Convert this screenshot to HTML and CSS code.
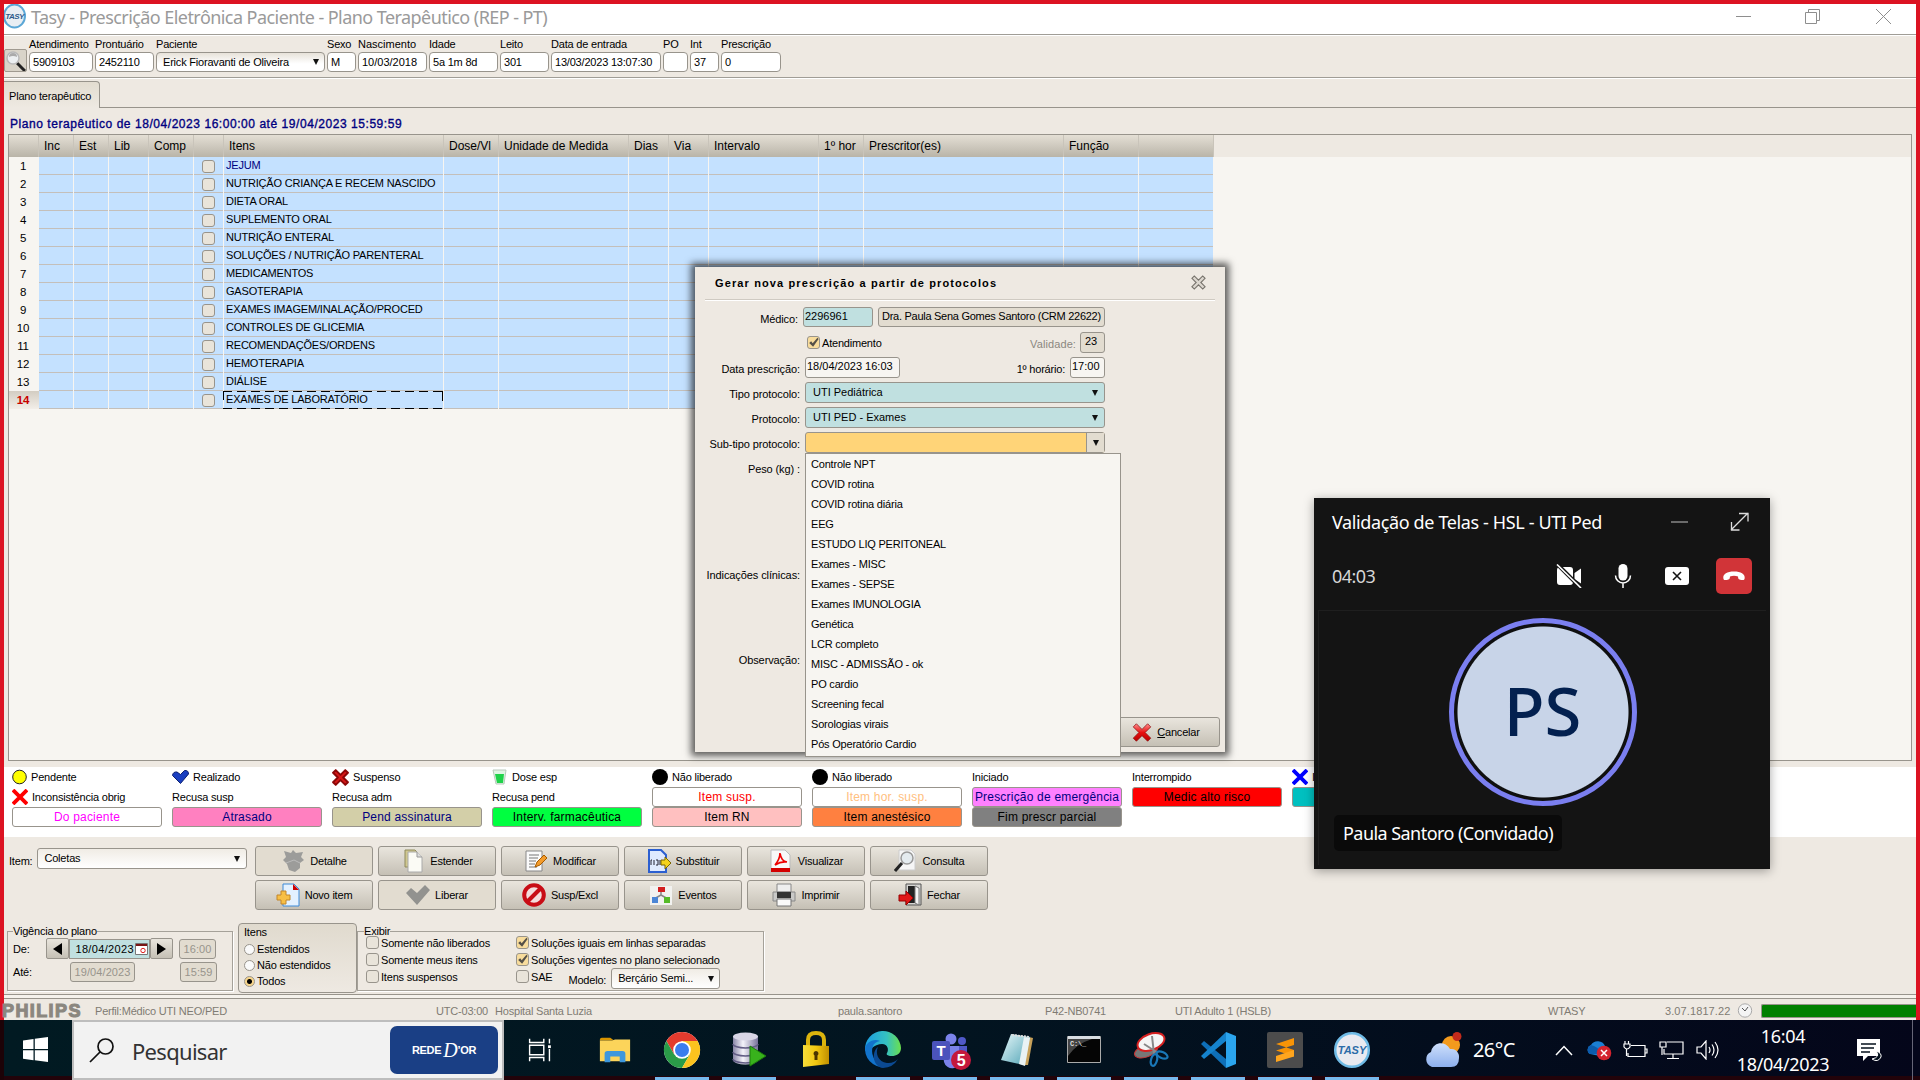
FILE: index.html
```html
<!DOCTYPE html>
<html lang="pt-BR">
<head>
<meta charset="utf-8">
<title>Tasy - Prescrição Eletrônica Paciente - Plano Terapêutico (REP - PT)</title>
<link rel="stylesheet" href="styles.css">
</head>
<body>
<svg class="defs" width="0" height="0" aria-hidden="true">
  <defs>
    <linearGradient id="redg" x1="0" y1="0" x2="0" y2="1"><stop offset="0" stop-color="#ff8f8f"/><stop offset=".5" stop-color="#e81010"/><stop offset="1" stop-color="#b80000"/></linearGradient>
    <linearGradient id="edgeg" x1="0" y1="0" x2="1" y2="0"><stop offset="0" stop-color="#1b9de2"/><stop offset=".6" stop-color="#35c1c1"/><stop offset="1" stop-color="#6be04e"/></linearGradient>
    <linearGradient id="cyl" x1="0" y1="0" x2="1" y2="0"><stop offset="0" stop-color="#8a86a8"/><stop offset=".4" stop-color="#f4f3fa"/><stop offset="1" stop-color="#77729a"/></linearGradient>
    <linearGradient id="gold" x1="0" y1="0" x2="1" y2="0"><stop offset="0" stop-color="#f7dd3a"/><stop offset=".5" stop-color="#f2c811"/><stop offset="1" stop-color="#c08f00"/></linearGradient>
    <linearGradient id="note" x1="0" y1="0" x2="1" y2="1"><stop offset="0" stop-color="#e8f8fa"/><stop offset="1" stop-color="#4fa3b5"/></linearGradient>
    <linearGradient id="cloud" x1="0" y1="0" x2="0" y2="1"><stop offset="0" stop-color="#cfe0fb"/><stop offset="1" stop-color="#8db0ee"/></linearGradient>
    <symbol id="check" viewBox="0 0 14 14"><path d="M1.500 7.500 4 5.500l2 2.500L12 1l1.500 1.500L6.500 12.500z" fill="#555048"/></symbol>
    <symbol id="cross" viewBox="0 0 16 16"><path d="M1 3.500 3.500 1 8 5.500 12.500 1 15 3.500 10.500 8 15 12.500 12.500 15 8 10.500 3.500 15 1 12.500 5.500 8z"/></symbol>
  </defs>
</svg>

<div class="app">
  <header class="titlebar">
    <svg class="logo" width="24" height="26" viewBox="0 0 24 26"><ellipse cx="10.500" cy="12" rx="10.500" ry="11.500" fill="#e9eef3" stroke="#5ba7d6" stroke-width="2"/><text x="10.500" y="14.500" text-anchor="middle" class="logo-text">TASY</text></svg>
    <h1 class="title">Tasy - Prescrição Eletrônica Paciente - Plano Terapêutico (REP - PT)</h1>
    <svg class="winctl" width="160" height="20" viewBox="0 0 160 20" fill="none" stroke="#8e8e8e"><path d="M0 9.500h15M72.500 5.500v-3h11v11h-3M69.500 5.500h11v11h-11zM140 2l15 15M155 2l-15 15"/></svg>
  </header>

  <section class="toolbar">
    <button class="find"><svg width="22" height="22" viewBox="0 0 22 22"><path d="m12 13 8 8" stroke="#222" stroke-width="3"/><circle cx="8" cy="8" r="6" fill="#eceff1" stroke="#b9b9b9" stroke-width="1.500"/><path d="M4 7a4 4 0 0 1 8 0q-4-2-8 0z" fill="#aaa"/></svg></button>
    <label class="f w-at"><span>Atendimento</span><b>5909103</b></label>
    <label class="f w-pr"><span>Prontuário</span><b>2452110</b></label>
    <label class="f w-pa"><span>Paciente</span><b class="combo">Erick Fioravanti de Oliveira<i class="arrow"></i></b></label>
    <label class="f w-sx"><span>Sexo</span><b>M</b></label>
    <label class="f w-na"><span>Nascimento</span><b>10/03/2018</b></label>
    <label class="f w-id"><span>Idade</span><b>5a 1m 8d</b></label>
    <label class="f w-le"><span>Leito</span><b>301</b></label>
    <label class="f w-da"><span>Data de entrada</span><b>13/03/2023 13:07:30</b></label>
    <label class="f w-po"><span>PO</span><b></b></label>
    <label class="f w-in"><span>Int</span><b>37</b></label>
    <label class="f w-ps"><span>Prescrição</span><b>0</b></label>
  </section>

  <nav class="tabs"><span class="tab">Plano terapêutico</span></nav>
  <h2 class="caption">Plano terapêutico de 18/04/2023 16:00:00 até 19/04/2023 15:59:59</h2>

  <section class="plan">
    <div class="head"><div class="head-cells"><span></span><span>Inc</span><span>Est</span><span>Lib</span><span>Comp</span><span></span><span>Itens</span><span>Dose/Vl</span><span>Unidade de Medida</span><span>Dias</span><span>Via</span><span>Intervalo</span><span>1º hor</span><span>Prescritor(es)</span><span>Função</span><span></span></div></div>
    <div class="rows">
      <div class="row first"><em>1</em><i class="cb"></i><span>JEJUM</span></div>
      <div class="row"><em>2</em><i class="cb"></i><span>NUTRIÇÃO CRIANÇA E RECEM NASCIDO</span></div>
      <div class="row"><em>3</em><i class="cb"></i><span>DIETA ORAL</span></div>
      <div class="row"><em>4</em><i class="cb"></i><span>SUPLEMENTO ORAL</span></div>
      <div class="row"><em>5</em><i class="cb"></i><span>NUTRIÇÃO ENTERAL</span></div>
      <div class="row"><em>6</em><i class="cb"></i><span>SOLUÇÕES / NUTRIÇÃO PARENTERAL</span></div>
      <div class="row"><em>7</em><i class="cb"></i><span>MEDICAMENTOS</span></div>
      <div class="row"><em>8</em><i class="cb"></i><span>GASOTERAPIA</span></div>
      <div class="row"><em>9</em><i class="cb"></i><span>EXAMES IMAGEM/INALAÇÃO/PROCED</span></div>
      <div class="row"><em>10</em><i class="cb"></i><span>CONTROLES DE GLICEMIA</span></div>
      <div class="row"><em>11</em><i class="cb"></i><span>RECOMENDAÇÕES/ORDENS</span></div>
      <div class="row"><em>12</em><i class="cb"></i><span>HEMOTERAPIA</span></div>
      <div class="row"><em>13</em><i class="cb"></i><span>DIÁLISE</span></div>
      <div class="row current"><em>14</em><i class="cb"></i><span>EXAMES DE LABORATÓRIO</span></div>
    </div>
  </section>

  <section class="legend">
    <div class="lcol">
      <p><svg width="15" height="16"><circle cx="7.500" cy="8" r="6.800" fill="#ffff00" stroke="#222"/></svg>Pendente</p>
      <p><svg width="16" height="16" viewBox="0 0 16 16" stroke="#f00" stroke-width="3.800"><path d="m1 1 14 14M15 1 1 15"/></svg>Inconsistência obrig</p>
      <mark class="tag pac">Do paciente</mark>
    </div>
    <div class="lcol">
      <p><svg width="17" height="16" viewBox="0 0 17 16"><path d="M.500 6.500q.5-4 4.500-3.500l3.500 2.500 4-4q4-.5 4 3.500L8.500 14.500z" fill="#1a3fc0" stroke="#0b1f70"/></svg>Realizado</p>
      <p>Recusa susp</p>
      <mark class="tag atr">Atrasado</mark>
    </div>
    <div class="lcol">
      <p><svg width="17" height="17" viewBox="0 0 16 16" fill="#d81818" stroke="#8c0808" stroke-width="1.800" stroke-linejoin="round"><use href="#cross"/></svg>Suspenso</p>
      <p>Recusa adm</p>
      <mark class="tag pend">Pend assinatura</mark>
    </div>
    <div class="lcol">
      <p><svg width="16" height="16" viewBox="0 0 16 16"><path d="M1 1h13l-2 14H4z" fill="#dff5e3" stroke="#b9c9bc"/><path d="M3 5h9l-1 9H5z" fill="#1fd24a"/></svg>Dose esp</p>
      <p>Recusa pend</p>
      <mark class="tag farm">Interv. farmacêutica</mark>
    </div>
    <div class="lcol">
      <p><svg width="16" height="16"><circle cx="8" cy="8" r="8"/></svg>Não liberado</p>
      <mark class="tag susp">Item susp.</mark>
      <mark class="tag rn">Item RN</mark>
    </div>
    <div class="lcol">
      <p><svg width="16" height="16"><circle cx="8" cy="8" r="8"/></svg>Não liberado</p>
      <mark class="tag hor">Item hor. susp.</mark>
      <mark class="tag anes">Item anestésico</mark>
    </div>
    <div class="lcol">
      <p>Iniciado</p>
      <mark class="tag emer">Prescrição de emergência</mark>
      <mark class="tag fim">Fim prescr parcial</mark>
    </div>
    <div class="lcol">
      <p>Interrompido</p>
      <mark class="tag alto">Medic alto risco</mark>
    </div>
    <div class="lcol">
      <p><svg width="16" height="16" viewBox="0 0 16 16" stroke="#00f" stroke-width="3.800"><path d="m1 1 14 14M15 1 1 15"/></svg>Inconsistência</p>
      <mark class="tag teal"></mark>
    </div>
  </section>

  <section class="actions">
    <label class="item-pick">Item:<b class="combo">Coletas<i class="arrow"></i></b></label>
    <div class="buttons">
      <button class="off"><svg viewBox="0 0 24 24"><path d="m3 2 7 2 2-3 3 3 7-1-2 5 3 3-4 3v5l-5 4-6-2-2-6-4-4 3-3z" fill="#9c9c9a"/><path d="m5 14 8-3 6 3" stroke="#bbb" fill="none"/></svg>Detalhe</button>
      <button><svg viewBox="0 0 24 24"><path d="M4 1h10l4 4v13H4z" fill="#cfc78f" stroke="#8f8a5c"/><path d="M7 3h9l5 5v15H7z" fill="#fbfbf5" stroke="#aaa"/><path d="M16 3v5h5" fill="#ddd" stroke="#999"/></svg>Estender</button>
      <button><svg viewBox="0 0 24 24"><path d="M2 2h16v20H2z" fill="#fafafa" stroke="#888"/><path d="M5 6h10M5 9h9M5 12h7M5 15h6M5 18h8" stroke="#777"/><path d="m11 18 2-5 7-7 3 3-7 7z" fill="#f39c2c" stroke="#a55a00"/></svg>Modificar</button>
      <button><svg viewBox="0 0 24 24"><path d="M2 1h12l5 5v17H2z" fill="#dfeaff" stroke="#2c5fd0" stroke-width="2"/><path d="M4 11h1m2 0v5m2-5h2v5H9m4-5v5M4 11v5" stroke="#223" fill="none"/><path d="M14 11h4V8l6 6-6 6v-4h-4z" fill="#f5d21c" stroke="#7a6500"/></svg>Substituir</button>
      <button><svg viewBox="0 0 24 24"><path d="M2 1h14l5 5v17H2z" fill="#f8f8f8" stroke="#bbb"/><path d="M2 19h19v4H2z" fill="#d40000"/><path d="M6 16q5-6 5-12 1 8 7 9-6-1-12 3z" fill="none" stroke="#e00" stroke-width="1.700"/></svg>Visualizar</button>
      <button><svg viewBox="0 0 24 24"><path d="M5 1h12l4 4v16H5z" fill="#f6f6f6" stroke="#ccc"/><circle cx="13" cy="9" r="6" fill="#e4ebef" stroke="#999" stroke-width="1.500"/><path d="m8 14-7 8" stroke="#222" stroke-width="3"/></svg>Consulta</button>
      <button><svg viewBox="0 0 24 24"><path d="M7 1h11l5 5v17H7z" fill="#e3f1ff" stroke="#3d8ad8"/><path d="M17 1v6h6z" fill="#c00"/><path d="M5 8h5v4h4v5h-4v4H5v-4H1v-5h4z" fill="#f7bf45" stroke="#c2862a"/></svg>Novo item</button>
      <button class="off"><svg viewBox="0 0 24 24"><path d="m0 10 5-5 6 5 8-8 5 5L11 22z" fill="#92928f"/></svg>Liberar</button>
      <button><svg viewBox="0 0 24 24"><circle cx="12" cy="12" r="9.800" fill="#f4dcdc" stroke="#c80d16" stroke-width="4"/><path d="m6 18 12-12" stroke="#c80d16" stroke-width="4"/></svg>Susp/Excl</button>
      <button><svg viewBox="0 0 24 24"><path d="M1 3h22v19H1z" fill="#f2f2f0"/><path d="M12 8v4L5 16m7-4 7 4" stroke="#888" stroke-width="1.500" fill="none"/><path d="M9 4h7v5H9z" fill="#d32020"/><path d="M3 14h6v6H3z" fill="#4b86d6"/><path d="M15 14h6v6h-6z" fill="#56bb28"/></svg>Eventos</button>
      <button><svg viewBox="0 0 24 24"><path d="M5 1h14v8H5z" fill="#eee" stroke="#888"/><path d="M1 9h22v9H1z" fill="#c9c9c7" stroke="#888"/><path d="M5 9h14v6H5z" fill="#333"/><path d="M5 16h14v7H5z" fill="#fafafa" stroke="#777"/></svg>Imprimir</button>
      <button><svg viewBox="0 0 24 24"><path d="M8 1h15v21H8z" fill="#d5d5d2" stroke="#555"/><path d="M10 3h7v17h-7z" fill="#222"/><path d="m17 3 4 2v17l-4-2z" fill="#f4f4f4" stroke="#777"/><path d="M1 12h7V8l7 7-7 7v-4H1z" fill="#e01818" stroke="#900"/></svg>Fechar</button>
    </div>
  </section>

  <section class="filters">
    <fieldset class="vig"><legend>Vigência do plano</legend>
      <div class="line"><span class="k">De:</span><button class="nav"><i class="left"></i></button><b class="date">18/04/2023<svg width="13" height="12" viewBox="0 0 13 12"><path d="M.500.500h12v11H.500z" fill="#fff" stroke="#777"/><path d="M1 2h11" stroke="#7a1616" stroke-width="2"/><circle cx="8" cy="7.500" r="2.200" fill="none" stroke="#d22"/></svg></b><button class="nav"><i class="right"></i></button><b class="dis hm">16:00</b></div>
      <div class="line"><span class="k">Até:</span><b class="dis dt">19/04/2023</b><b class="dis hm">15:59</b></div>
    </fieldset>
    <div class="itens"><span>Itens</span><label><i class="radio"></i>Estendidos</label><label><i class="radio"></i>Não estendidos</label><label><i class="radio on"></i>Todos</label></div>
    <fieldset class="exi"><legend>Exibir</legend>
      <div class="c1"><label><i class="cb"></i>Somente não liberados</label><label><i class="cb"></i>Somente meus itens</label><label><i class="cb"></i>Itens suspensos</label></div>
      <div class="c2"><label><svg class="cb on"><use href="#check"/></svg>Soluções iguais em linhas separadas</label><label><svg class="cb on"><use href="#check"/></svg>Soluções vigentes no plano selecionado</label><label><i class="cb"></i>SAE<span class="mod">Modelo:</span><b class="combo">Berçário Semi...<i class="arrow"></i></b></label></div>
    </fieldset>
  </section>

  <footer class="status">
    <strong>PHILIPS</strong><span class="s1">Perfil:Médico UTI NEO/PED</span><span class="s2">UTC-03:00</span><span class="s3">Hospital Santa Luzia</span><span class="s4">paula.santoro</span><span class="s5">P42-NB0741</span><span class="s6">UTI Adulto 1 (HSLB)</span><span class="s7">WTASY</span><span class="s8">3.07.1817.22</span>
    <svg class="clock" width="16" height="15" viewBox="0 0 16 15"><circle cx="8" cy="7.500" r="6.700" fill="#f4f4f4" stroke="#aaa"/><path d="m5 5 3 3 3-4" fill="none" stroke="#555"/></svg><i class="bar"></i>
  </footer>
</div>

<div class="dialog">
  <header><h3>Gerar nova prescrição a partir de protocolos</h3><svg width="15" height="15" viewBox="0 0 16 16" fill="#dcd7cf" stroke="#77736c" stroke-width="1.200"><use href="#cross"/></svg></header>
  <div class="form">
    <div class="r r1"><span class="lb">Médico:</span><b class="in aqua med">2296961</b><b class="in grey dra">Dra. Paula Sena Gomes Santoro (CRM 22622)</b></div>
    <div class="r r2"><svg class="cb on"><use href="#check"/></svg><span class="at">Atendimento</span><span class="va">Validade:</span><b class="in grey n23">23</b></div>
    <div class="r"><span class="lb">Data prescrição:</span><b class="in dtp">18/04/2023 16:03</b><span class="ho">1º horário:</span><b class="in h17">17:00</b></div>
    <div class="r"><span class="lb">Tipo protocolo:</span><b class="in aqua wide">UTI Pediátrica<i class="arrow"></i></b></div>
    <div class="r"><span class="lb">Protocolo:</span><b class="in aqua wide">UTI PED - Exames<i class="arrow"></i></b></div>
    <div class="r"><span class="lb">Sub-tipo protocolo:</span><b class="in sub"><u><i class="arrow"></i></u></b></div>
    <div class="r r7"><span class="lb">Peso (kg) :</span></div>
    <div class="r r8"><span class="lb">Indicações clínicas:</span></div>
    <div class="r r9"><span class="lb">Observação:</span></div>
  </div>
  <button class="cancel"><svg width="20" height="21" viewBox="0 0 16 16" fill="url(#redg)" stroke="#8b1010" stroke-width=".6"><use href="#cross"/></svg><span><u>C</u>ancelar</span></button>
  <ul class="drop"><li>Controle NPT</li><li>COVID rotina</li><li>COVID rotina diária</li><li>EEG</li><li>ESTUDO LIQ PERITONEAL</li><li>Exames - MISC</li><li>Exames - SEPSE</li><li>Exames IMUNOLOGIA</li><li>Genética</li><li>LCR completo</li><li>MISC - ADMISSÃO - ok</li><li>PO cardio</li><li>Screening fecal</li><li>Sorologias virais</li><li>Pós Operatório Cardio</li></ul>
</div>

<aside class="call">
  <div class="call-top"><span>Validação de Telas - HSL - UTI Ped</span><svg width="80" height="20" viewBox="0 0 80 20" fill="none" stroke="#ddd" stroke-width="1.300"><path d="M1 10h17" stroke="#999"/><path d="m61 18 17-17M69 1.500h9v8M61.500 10v8h8"/></svg></div>
  <div class="call-bar"><span>04:03</span>
    <svg class="cam" width="26" height="24" viewBox="0 0 26 24"><path d="M4 3h10q3 0 3 3v12q0 3-3 3H4q-3 0-3-3V6q0-3 3-3zM18.500 9 25 4.500v15L18.500 15z" fill="#fff"/><path d="m1 0 24 24" stroke="#141414" stroke-width="4"/><path d="m1 .5 24 23.500" stroke="#fff" stroke-width="1.600"/></svg>
    <svg class="mic" width="18" height="24" viewBox="0 0 18 24"><rect x="4.500" width="9" height="16.500" rx="4.500" fill="#fff"/><path d="M1.500 11.500a7.500 7.500 0 0 0 15 0M9 19.500V24" fill="none" stroke="#fff" stroke-width="1.500"/></svg>
    <svg class="shr" width="24" height="18" viewBox="0 0 24 18"><rect width="24" height="18" rx="3" fill="#fff"/><path d="m8 5 8 8m0-8-8 8" stroke="#141414" stroke-width="1.600"/></svg>
    <button class="hang"><svg width="22" height="10" viewBox="0 0 22 10"><path d="M11 .5C4 .5 0 3 .3 7c.2 2.300 1.500 2.300 3.500 1.900 2.700-.6 3-.9 3.200-3.500q4-1.500 8 0c.2 2.600.5 2.900 3.200 3.500 2 .4 3.300.4 3.500-1.900C22 3 18 .5 11 .5z" fill="#fff"/></svg></button>
  </div>
  <div class="stage"><div class="avatar"><span>PS</span></div><span class="who">Paula Santoro (Convidado)</span></div>
</aside>

<footer class="taskbar">
  <span class="start"><svg width="25" height="25" viewBox="0 0 25 25" fill="#fff"><path d="M0 3.500 10.500 2v10H0zM11.800 1.800 25 0v12H11.800zM0 13.200h10.500v10L0 21.800zM11.800 13.200H25V25l-13.200-1.800z"/></svg></span>
  <div class="search"><svg width="25" height="25" viewBox="0 0 25 25" fill="none" stroke="#111" stroke-width="1.700"><circle cx="16.500" cy="8.500" r="7.500"/><path d="m11 14-10 10"/></svg><span>Pesquisar</span><div class="rede">REDE<i>D</i>’OR</div></div>
  <div class="apps">
    <span><svg viewBox="0 0 36 36" fill="none" stroke="#fff" stroke-width="1.500"><path d="M7 6v4h15V6M7 30v-4h15v4M7 13h15v10H7zM28 6v5M28 17v13"/><path d="M26.500 13h3v3h-3z" fill="#fff" stroke="none"/></svg></span>
    <span><svg viewBox="0 0 36 36"><path d="M2 7q0-2 2-2h9l4 3h-15z" fill="#d99500"/><path d="M2 8h13l3-1h16v23H2z" fill="#fcd45a"/><path d="M7 31V22q0-3 3-3h16q3 0 3 3v9h-6v-6H13v6z" fill="#3e97dc"/></svg></span>
    <span class="run"><svg viewBox="0 0 36 36"><circle cx="18" cy="18" r="18" fill="#fff"/><path d="M18 0a18 18 0 0 1 15.600 9H18L10.200 22.500 2.400 9A18 18 0 0 1 18 0z" fill="#e33b2e"/><path d="M2.400 9A18 18 0 0 0 18 36l7.800-13.500H10.200z" fill="#2a9c48"/><path d="M33.600 9A18 18 0 0 1 18 36l7.800-13.500L18 9z" fill="#fcc31e"/><circle cx="18" cy="18" r="8.800" fill="#fff"/><circle cx="18" cy="18" r="7" fill="#3b7ded"/></svg></span>
    <span class="run"><svg viewBox="0 0 36 36"><path d="M2 4v24a12.500 4.500 0 0 0 25 0V4z" fill="url(#cyl)"/><ellipse cx="14.500" cy="4.500" rx="12.500" ry="4" fill="#d8d6e6"/><path d="M2 12a12.500 4 0 0 0 25 0M2 20a12.500 4 0 0 0 25 0M2 27a12.500 4 0 0 0 25 0" fill="none" stroke="#625d85" stroke-width="1.500"/><path d="m19 14 16 10-16 10z" fill="#38b21c" stroke="#1d7a0c"/></svg></span>
    <span><svg viewBox="0 0 36 36"><path d="M10 16V8q0-7 8-7t8 7v8" fill="none" stroke="#dcb40d" stroke-width="4"/><path d="M5 13l26 1v18L5 35z" fill="url(#gold)"/><path d="M18 19a2.500 2.500 0 0 1 1.500 4.500V28h-3v-4.500A2.500 2.500 0 0 1 18 19z" fill="#4b3500"/></svg></span>
    <span class="run"><svg viewBox="0 0 36 36"><path d="M0 18a18 18 0 0 1 36-2c0 6-5 8-9 8-5 0-6-2-5-3 2-3 1-9-5-9-7 0-13 5-13 11z" fill="url(#edgeg)"/><path d="M0 18c0-7 8-12 15-9-8 1-9 9-7 15 2 7 9 10 16 10A18 18 0 0 1 0 18z" fill="#1273cb"/><path d="M13 15c-3 6 0 15 9 16 5 .5 9-2 11-4A18 18 0 0 1 18 36C8 35 6 20 13 15z" fill="#0b4a92"/></svg></span>
    <span class="run"><svg viewBox="0 0 44 36"><circle cx="23" cy="7" r="5.500" fill="#7b83eb"/><circle cx="34" cy="9" r="4" fill="#5059c9"/><path d="M14 14h18v12a8 8 0 0 1-16 4z" fill="#7b83eb"/><path d="M31 14h8v10q-4 5-8 3z" fill="#5059c9"/><rect x="4" y="9" width="18" height="19" rx="2" fill="#4b53bc"/><text x="13" y="23.500" text-anchor="middle" class="tt">T</text><circle cx="33" cy="28" r="10" fill="#c4183c"/><text x="33" y="34" text-anchor="middle" class="t5">5</text></svg></span>
    <span class="run"><svg viewBox="0 0 36 36"><path d="m30 5 4 1-5 27-6 0z" fill="#c7a15a"/><path d="M12 2 31 5 25 33 2 28z" fill="url(#note)"/><path d="m25 5 6 1-5 28-6-2z" fill="#e9f2f4"/><path d="m13 3 18 2" stroke="#ddd" stroke-width="2" stroke-dasharray="2 1"/></svg></span>
    <span class="run"><svg viewBox="0 0 36 36"><path d="M1.500 4.500h33v26h-33z" fill="#050505" stroke="#aaa"/><path d="M2 4h32v3H2z" fill="#d8dde2"/><path d="M2 7h24Q10 12 2 24z" fill="#444"/><text x="4" y="14" class="cmd">C:\_</text></svg></span>
    <span class="run"><svg viewBox="0 0 36 36"><ellipse cx="13" cy="19" rx="12" ry="6" transform="rotate(-20 13 19)" fill="#777" stroke="#c33"/><ellipse cx="18" cy="10" rx="14" ry="8" transform="rotate(-20 18 10)" fill="#f5f5f5" stroke="#d62020" stroke-width="2"/><path d="m19 4 2 18M11 12l14 9" stroke="#888" stroke-width="2"/><g fill="none" stroke="#1a78b8" stroke-width="2.200"><ellipse cx="21" cy="28" rx="3" ry="6" transform="rotate(15 21 28)"/><ellipse cx="29" cy="23" rx="6" ry="3" transform="rotate(25 29 23)"/></g></svg></span>
    <span class="run"><svg viewBox="0 0 36 36"><path d="m1 12 3-3 22 18v9z" fill="#0e6fb8"/><path d="m1 24 3 3L26 9V0z" fill="#1583cd"/><path d="m26 0 10 4v28l-10 4z" fill="#2ba5ee"/></svg></span>
    <span class="run"><svg viewBox="0 0 36 36"><rect width="36" height="36" rx="2" fill="#4c4c4c"/><path d="m9 12 18-6v7L9 18.500zM9 12v6.500l18 6V18z" fill="#f89406"/><path d="m9 24 18-6v6.500L9 30z" fill="#ffa51d"/></svg></span>
    <span class="run"><svg viewBox="0 0 36 36"><circle cx="18" cy="18" r="16.800" fill="#e9eaf0" stroke="#6fbbe6" stroke-width="2.500"/><text x="18" y="21.500" text-anchor="middle" class="tasy">TASY</text></svg></span>
  </div>
  <div class="tray">
    <svg class="wx" width="38" height="36" viewBox="0 0 38 36"><circle cx="27" cy="13" r="9" fill="#f39a1d"/><circle cx="33" cy="4.500" r="4.500" fill="#c42b1c"/><path d="M8 35a8 8 0 0 1-1-15 10 10 0 0 1 19-3 8 8 0 0 1 9 9q0 9-8 9z" fill="url(#cloud)"/></svg>
    <span class="temp">26°C</span>
    <svg class="chev" width="18" height="11" viewBox="0 0 18 11" fill="none" stroke="#fff" stroke-width="1.500"><path d="m1 10 8-8.500 8 8.500"/></svg>
    <svg class="od" width="26" height="22" viewBox="0 0 26 22"><path d="M4 15a5 5 0 0 1 1-9 8 8 0 0 1 14 1l-5 10z" fill="#1b7fd4"/><path d="M5 6q6 1 12 9H4a5 5 0 0 1 1-9z" fill="#0c5cad"/><circle cx="18" cy="14" r="7.300" fill="#d4232e"/><path d="m15 11 6 6m0-6-6 6" stroke="#fff" stroke-width="1.500"/></svg>
    <svg class="bat" width="25" height="18" viewBox="0 0 25 18" fill="none" stroke="#fff" stroke-width="1.200"><path d="M8 4.500h14v11H5V12M22 8h2v4h-2M3.500 8v7M1 3h6v3q-3 4-6 0zM2 0v3M5.500 0v3"/></svg>
    <svg class="net" width="25" height="20" viewBox="0 0 25 20" fill="none" stroke="#fff" stroke-width="1.200"><path d="M8 2h16v12H5V9M8 18.500h12M14 14v4M1 2h6v5H1zM3 7v8"/></svg>
    <svg class="vol" width="24" height="20" viewBox="0 0 24 20" fill="none" stroke="#fff" stroke-width="1.200"><path d="M1 7h4l5-6v18l-5-6H1zM13 7q2 3 0 6M16 4.500q4 5.500 0 11M19 2q6 8 0 16"/></svg>
    <div class="time"><span>16:04</span><span>18/04/2023</span></div>
    <svg class="nt" width="26" height="26" viewBox="0 0 26 26"><path d="M1 2h23v17H12l-5 5v-5H1z" fill="#fff"/><path d="M5 7h15M5 11h13M5 15h9" stroke="#04101c" stroke-width="1.400"/><path d="M20 14q5 6-4 8 6 4 9-2 1-4-5-6z" fill="#04101c" stroke="#fff"/></svg>
    <i class="peek"></i>
  </div>
</footer>
</body>
</html>
```
FILE: styles.css
```css
* { box-sizing: border-box; }
body { margin: 0; width: 1920px; height: 1080px; overflow: hidden; background: #eee9e2; font: 11px/14px "Liberation Sans", Arial, sans-serif; letter-spacing: -0.2px; color: #000; }
h1, h2, h3, p, ul, fieldset { margin: 0; padding: 0; border: 0; font-weight: normal; }
button { font: inherit; letter-spacing: inherit; padding: 0; color: #000; }
b, em, i, u { font-weight: normal; font-style: normal; text-decoration: none; }
span, b, label, p, mark { white-space: nowrap; }
svg { flex: none; }
.defs { position: absolute; }

.app { display: flex; flex-direction: column; height: 1020px; border: 4px solid #dc1322; border-bottom: 0; }
.titlebar { display: flex; height: 30px; background: #fff; }
.logo-text { font: italic bold 8px "Liberation Sans", sans-serif; fill: #2c5a8a; letter-spacing: -0.5px; }
.title { flex: 1; margin-left: 3px; font: 18px/27px "Noto Sans", sans-serif; color: #9a9a9a; letter-spacing: -0.56px; }
.winctl { margin: 3px 20px 0 0; }
.toolbar { display: flex; gap: 2px; height: 43px; border-top: 1px solid #a09d96; box-shadow: inset 0 1px #fff; padding-top: 2px; }
.find { width: 23px; height: 23px; margin-top: 12px; border: 1px solid #a09a90; border-radius: 2px; background: #d9d4c9; overflow: hidden; }
.f { display: flex; flex-direction: column; }
.f span { height: 15px; }
.f b { height: 20px; padding-left: 3px; border: 1px solid #98948c; border-radius: 4px; background: #fff; line-height: 18px; overflow: hidden; }
.w-at { width: 64px; } .w-pr { width: 59px; } .w-pa { width: 169px; } .w-sx { width: 29px; } .w-na { width: 69px; letter-spacing: 0; }
.w-id { width: 69px; } .w-le { width: 49px; } .w-da { width: 110px; } .w-po { width: 25px; } .w-in { width: 29px; } .w-ps { width: 60px; }
.combo { display: flex; justify-content: space-between; align-items: center; border: 1px solid #98948c; border-radius: 3px; background: linear-gradient(#f0ece5, #fff); }
.f .combo { padding: 0 5px 0 6px; background: linear-gradient(#e7e2d9, #fff 60%); }
.arrow { width: 0; height: 0; border: 3.5px solid transparent; border-top: 6px solid #111; border-bottom: 0; }
.tabs { height: 31px; border-top: 1px solid #a09d96; box-shadow: inset 0 1px #fff; display: flex; border-bottom: 1px solid #98948c; padding-top: 3px; }
.tab { width: 96px; height: 27px; padding: 7px 0 0 5px; border: solid #98948c; border-width: 1px 1px 0 0; border-radius: 0 4px 0 0; background: linear-gradient(#e2dcd0, #eee9e2); }
.caption { height: 26px; padding-left: 6px; color: #000080; font-size: 12px; line-height: 32px; letter-spacing: 0.55px; -webkit-text-stroke: 0.35px #000080; }

.plan { width: 1904px; height: 627px; margin-left: 4px; border: 1px solid #98948c; background: #f7f5f1; }
.head { height: 22px; background: #eee9e2; }
.head-cells { display: grid; width: 1205px; height: 22px; grid-template-columns: 30px 35px 35px 40px 45px 30px 220px 55px 130px 40px 40px 110px 45px 200px 75px 75px; background: linear-gradient(#e4dfd5, #b9b4a8); }
.head-cells span { padding-left: 5px; line-height: 22px; font-size: 12px; letter-spacing: 0; border-right: 1px solid #c9c4ba; }
.rows { width: 1204px; background:
  linear-gradient(90deg, transparent 64px, #f7f5f1 64px 65px, transparent 65px 99px, #f7f5f1 99px 100px, transparent 100px 139px, #f7f5f1 139px 140px, transparent 140px 184px, #f7f5f1 184px 185px, transparent 185px 214px, #f7f5f1 214px 215px, transparent 215px 434px, #f7f5f1 434px 435px, transparent 435px 489px, #f7f5f1 489px 490px, transparent 490px 619px, #f7f5f1 619px 620px, transparent 620px 659px, #f7f5f1 659px 660px, transparent 660px 699px, #f7f5f1 699px 700px, transparent 700px 809px, #f7f5f1 809px 810px, transparent 810px 854px, #f7f5f1 854px 855px, transparent 855px 1054px, #f7f5f1 1054px 1055px, transparent 1055px 1129px, #f7f5f1 1129px 1130px, transparent 1130px),
  repeating-linear-gradient(transparent 0 17px, #c4bfba 17px 18px),
  #c4e1ff; }
.row { display: flex; align-items: center; height: 18px; }
.row em { width: 30px; height: 18px; padding-right: 2px; text-align: center; line-height: 19px; background: #f7f5f1; font-size: 11.5px; }
.row .cb { margin: 1px 8px 0 163px; }
.row span { width: 220px; height: 18px; padding-left: 3px; line-height: 17px; letter-spacing: -0.2px; }
.first span { color: #000080; }
.current em { background: linear-gradient(#d3cdc2, #f2eee8); color: #c80000; font-weight: bold; }
.current span { background:
  repeating-linear-gradient(90deg, #000 0 9px, transparent 9px 14px) 0 0 / 100% 1px no-repeat,
  repeating-linear-gradient(90deg, #000 0 9px, transparent 9px 14px) 0 100% / 100% 1px no-repeat,
  linear-gradient(#000 0 9px, transparent 9px) 0 0 / 1px 100% no-repeat,
  linear-gradient(#000 0 10px, transparent 10px) 100% 0 / 1px 100% no-repeat; }
.cb { display: inline-block; flex: none; width: 13px; height: 13px; border: 1px solid #98948c; border-radius: 3px; background: #e9e4da; }
.cb.on { background: #f8dc9c; overflow: visible; }

.legend { display: flex; height: 70px; margin-top: 6px; padding-left: 8px; background: #fff; overflow: hidden; }
.lcol { flex: none; width: 160px; }
.lcol p { display: flex; align-items: center; gap: 4px; height: 20px; }
.tag { display: block; width: 150px; height: 20px; border: 1px solid #98948c; border-radius: 3px; background: #fff; text-align: center; font-size: 12px; line-height: 19px; letter-spacing: 0.2px; }
.pac { color: #f0f; } .atr { background: #ff80c0; color: #000080; } .pend { background: #d3cfa8; color: #000080; } .farm { background: #00ff40; }
.susp { color: #f00; } .rn { background: #ffc0c0; } .hor { color: #ffc080; } .anes { background: #ff8040; } .emer { background: #ff80ff; color: #000080; }
.fim { background: #808080; } .alto { background: #f00; } .teal { background: #00c0c0; }

.actions { display: flex; height: 73px; margin-top: 9px; padding-left: 5px; }
.item-pick { display: flex; gap: 5px; width: 246px; line-height: 30px; }
.item-pick .combo { width: 210px; height: 21px; margin-top: 2px; padding: 0 6px; line-height: 19px; }
.buttons { display: grid; grid-template-columns: repeat(6, 118px); grid-auto-rows: 30px; gap: 4px 5px; }
.buttons button, .cancel { display: flex; align-items: center; justify-content: center; gap: 5px; border: 1px solid #98948c; border-radius: 3px; background: linear-gradient(#e9e5dd, #c5c0b5); }
.buttons button.off { background: #e2dcd0; }
.buttons svg { width: 24px; height: 24px; }

.filters { display: flex; height: 74px; margin-top: 5px; }
.filters legend { height: 12px; margin-left: 5px; padding: 0; line-height: 12px; }
.vig, .exi { border: 1px solid #a5a199; box-shadow: 1px 1px #fff; height: 66px; margin-top: 1px; }
.vig { width: 226px; margin-left: 3px; }
.line { display: flex; align-items: center; height: 21px; margin-top: 1px; }
.vig .line + .line { margin-top: 2px; }
.k { width: 38px; padding-left: 5px; }
.nav { display: grid; place-items: center; width: 23px; height: 21px; border: 1px solid #98948c; border-radius: 2px; background: linear-gradient(#e9e5dd, #c5c0b5); }
.left, .right { border: 6px solid transparent; border-left-width: 0; border-right: 9px solid #000; }
.right { border-right: 0; border-left: 9px solid #000; }
.date { display: flex; align-items: center; justify-content: flex-end; gap: 1px; width: 81px; height: 20px; padding-right: 1px; background: #c0e0e0; border: 1px solid #98948c; letter-spacing: 0.35px; }
.dis { height: 20px; border: 1px solid #98948c; border-radius: 3px; background: #e2dcd0; color: #98948c; line-height: 18px; text-align: center; letter-spacing: 0.1px; }
.hm { width: 37px; margin-left: 6px; }
.dt { width: 65px; margin-left: 24px; }
.dt + .hm { margin-left: 45px; }
.itens { display: flex; flex-direction: column; width: 119px; height: 70px; margin-left: 5px; margin-top: -1px; padding: 1px 0 0 5px; border: 1px solid #98948c; border-radius: 4px; background: linear-gradient(#e0dace, #eee9e2); }
.itens label { display: flex; align-items: center; gap: 2px; height: 16px; }
.itens > span { height: 16px; }
.radio { width: 11px; height: 11px; border: 1px solid #98948c; border-radius: 50%; background: #fafafa; }
.radio.on { background: radial-gradient(#000 0 2px, #f8d68c 3px); }
.exi { display: grid; grid-template-columns: 150px 1fr; grid-template-rows: 50px; width: 407px; margin-left: 0; padding-left: 8px; }
.filters .exi legend { margin-left: -2px; }
.exi div { margin-top: -3px; }
.exi label { display: flex; align-items: center; gap: 2px; height: 17px; }
.mod { margin-left: 14px; padding-top: 7px; }
.exi .combo { width: 109px; height: 21px; margin: 4px 0 0 3px; padding: 0 5px 0 6px; line-height: 19px; }

.status { display: flex; align-items: center; height: 22px; padding-top: 2px; border-top: 1px solid #98948c; margin-top: auto; box-shadow: 0 -3px #f5f2ec, 0 -4px #98948c; color: #7f7b73; }
.status strong { width: 91px; margin-left: -2px; font-size: 18px; letter-spacing: 1.4px; color: #8b877f; -webkit-text-stroke: 1.1px #8b877f; }
.s1 { width: 341px; margin-left: 2px; } .s2 { width: 59px; } .s3 { width: 343px; } .s4 { width: 207px; } .s5 { width: 130px; } .s6 { width: 373px; } .s7 { width: 117px; } .s8 { width: 64px; letter-spacing: 0.1px; }
.clock { margin-left: 8px; }
.bar { flex: 1; height: 14px; margin-left: 8px; background: #008000; border: 1px solid #98948c; border-right: 0; border-radius: 2px 0 0 2px; }

.dialog { position: absolute; left: 695px; top: 267px; width: 530px; height: 485px; background: #eee9e2; box-shadow: 0 0 7px 4px rgba(0,0,0,.62); }
.dialog header { display: flex; justify-content: space-between; height: 33px; margin: 0 10px; padding: 8px 9px 0 10px; border-bottom: 1px solid #cfcac2; box-shadow: 0 1px #fff; }
.dialog h3 { font-weight: bold; font-size: 11px; line-height: 16px; letter-spacing: 1.12px; }
.form { padding-top: 4px; }
.r { display: flex; align-items: center; height: 25px; }
.lb { width: 105px; margin-right: 5px; padding-top: 3px; text-align: right; letter-spacing: -0.1px; }
.in { height: 21px; border: 1px solid #98948c; border-radius: 3px; background: #f7f5f1; line-height: 17px; padding-left: 1px; letter-spacing: 0; }
.aqua { background: #c0e0e0; } .grey { background: #e2dcd0; }
.r1 { height: 26px; }
.r1 .lb { width: 103px; } .r1 .in { height: 20px; }
.med { width: 70px; } .dra { width: 227px; margin-left: 5px; padding-left: 3px; letter-spacing: -0.27px; }
.r2 { padding-left: 112px; }
.at { width: 194px; margin-left: 2px; } .va { width: 60px; text-align: right; padding-top: 3px; color: #8b877f; margin-right: 4px; letter-spacing: .1px; }
.n23 { width: 25px; padding-left: 4px; } .dtp { width: 95px; } .ho { width: 165px; padding-top: 3px; text-align: right; margin-right: 5px; } .h17 { width: 35px; }
.wide { display: flex; justify-content: space-between; align-items: center; width: 300px; padding: 0 6px 0 7px; }
.sub { display: flex; justify-content: flex-end; width: 300px; background: #ffd478; }
.sub u { display: grid; place-items: center; width: 18px; border-left: 1px solid #98948c; background: #e2dcd0; }
.r7 { height: 24px; } .r8 { height: 192px; } .r8 .lb, .r9 .lb { padding-top: 0; } .r9 { height: 0; margin-top: -11px; }
.cancel { position: absolute; left: 415px; top: 450px; width: 110px; height: 30px; padding-left: 2px; }
.cancel u { text-decoration: underline; }
.drop { position: absolute; left: 110px; top: 186px; width: 316px; height: 304px; border: 1px solid #98948c; background: #f7f5f1; padding-left: 5px; list-style: none; line-height: 20px; }
.drop li { height: 20px; white-space: nowrap; }

.call { position: absolute; left: 1314px; top: 498px; width: 456px; height: 371px; background: #141414; color: #fff; font: 18px/24px "Noto Sans", sans-serif; letter-spacing: -0.55px; box-shadow: 0 2px 10px rgba(0,0,0,.35); }
.call-top { display: flex; justify-content: space-between; align-items: center; height: 48px; padding: 0 20px 0 18px; letter-spacing: -0.37px; }
.call-bar { display: flex; align-items: center; height: 64px; padding: 0 0 4px 18px; }
.call-bar span { width: 224px; color: #d6d6d6; }
.mic { margin-left: 32px; } .shr { margin-left: 33px; }
.hang { display: grid; place-items: center; width: 36px; height: 36px; margin-left: 27px; border: 0; border-radius: 5px; background: #d13438; }
.stage { display: flex; flex-direction: column; height: 255px; margin: 0 4px; border: solid #1f1f1f; border-width: 1px 0 0 1px; }
.avatar { display: grid; place-items: center; align-self: center; flex: none; width: 188px; height: 188px; margin: 7px 0 0; border: 5px solid #7b7ff0; border-radius: 50%; background: radial-gradient(circle, #c8d4e8 0 85px, #0f0f0f 86px); }
.avatar span { margin-top: -4px; font-size: 67px; line-height: 80px; font-weight: 500; color: #03204f; letter-spacing: 0; }
.who { align-self: flex-start; margin: 9px 0 0 15px; padding: 6px 9px; background: #0a0a0a; border-radius: 5px; }

.taskbar { display: flex; height: 60px; background: linear-gradient(transparent 56px, #22030a 56px), linear-gradient(90deg, #011a22, #021420 50%, #04061a); color: #fff; border-left: 4px solid #1c0207; }
.start { display: grid; place-items: center; width: 68px; padding: 0 5px 1px 0; }
.search { display: flex; align-items: center; width: 432px; height: 60px; padding: 0 4px 0 15px; border: 2px solid #bdbdbd; background: #f2f2f2; color: #333; font: 22px/30px "Noto Sans", sans-serif; letter-spacing: -0.7px; }
.search > span { flex: 1; margin-left: 18px; padding-top: 2px; }
.rede { display: flex; align-items: center; justify-content: center; width: 108px; height: 48px; border-radius: 7px; background: #1a3f85; color: #fff; font: bold 11px "Liberation Sans", sans-serif; letter-spacing: -0.3px; }
.rede i { font: italic 20px "Liberation Serif", serif; margin-left: 2px; }
.apps { display: flex; padding-left: 9px; }
.apps span { display: grid; place-items: center; width: 54px; height: 60px; margin-right: 13px; }
.apps span:first-child { margin-right: 21px; }
.apps svg { width: 36px; height: 36px; overflow: visible; }
.apps .run { border-bottom: 3px solid #76b9ed; padding-top: 3px; }
.apps span:nth-child(7) svg { width: 44px; }
.apps span:first-child svg, .apps span:nth-child(2) svg { width: 34px; }
.tt { font: bold 15px "Liberation Sans", sans-serif; fill: #fff; } .t5 { font: bold 16px "Liberation Sans", sans-serif; fill: #fff; }
.cmd { font: bold 7px "Liberation Mono", monospace; fill: #ddd; } .tasy { font: italic bold 11px "Liberation Sans", sans-serif; fill: #2c6ca8; letter-spacing: 0; }
.tray { display: flex; align-items: center; flex: 1; font: 20px/28px "Noto Sans", sans-serif; letter-spacing: -0.6px; }
.wx { margin-left: 32px; } .temp { width: 82px; margin-left: 11px; }
.od { margin-left: 13px; } .bat { margin-left: 11px; } .net { margin-left: 11px; } .vol { margin-left: 12px; }
.time { display: flex; flex-direction: column; align-items: center; width: 96px; margin-left: 15px; font-size: 18px; letter-spacing: -0.35px; }
.nt { margin-left: 25px; }
.peek { width: 1px; height: 60px; margin-left: auto; margin-right: 7px; background: #667; }
```
